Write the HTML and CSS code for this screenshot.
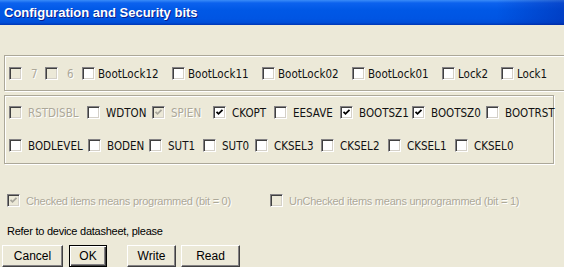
FILE: index.html
```html
<!DOCTYPE html>
<html>
<head>
  <title>Configuration and Security bits</title>
  <link rel="stylesheet" href="styles.css">
</head>
<body>
  <div class="titlebar">Configuration and Security bits</div>

  <div class="dialog">
    <!-- lock bits -->
    <div class="group group-lock">
      <div class="row row-lock">
        <label class="item disabled bitno"><span class="cb"></span><span class="txt">7</span></label>
        <label class="item disabled bitno"><span class="cb"></span><span class="txt">6</span></label>
        <label class="item"><span class="cb"></span><span class="txt">BootLock12</span></label>
        <label class="item"><span class="cb"></span><span class="txt">BootLock11</span></label>
        <label class="item"><span class="cb"></span><span class="txt">BootLock02</span></label>
        <label class="item"><span class="cb"></span><span class="txt">BootLock01</span></label>
        <label class="item"><span class="cb"></span><span class="txt">Lock2</span></label>
        <label class="item"><span class="cb"></span><span class="txt">Lock1</span></label>
      </div>
    </div>

    <!-- fuse bits -->
    <div class="group group-fuse">
      <div class="row row-fuse1">
        <label class="item disabled"><span class="cb"></span><span class="txt">RSTDISBL</span></label>
        <label class="item"><span class="cb"></span><span class="txt">WDTON</span></label>
        <label class="item disabled"><span class="cb checked"><svg viewBox="0 0 7 7"><polyline points="0.5,2.8 2.5,4.8 6.5,0.8"/></svg></span><span class="txt">SPIEN</span></label>
        <label class="item"><span class="cb checked"><svg viewBox="0 0 7 7"><polyline points="0.5,2.8 2.5,4.8 6.5,0.8"/></svg></span><span class="txt">CKOPT</span></label>
        <label class="item"><span class="cb"></span><span class="txt">EESAVE</span></label>
        <label class="item"><span class="cb checked"><svg viewBox="0 0 7 7"><polyline points="0.5,2.8 2.5,4.8 6.5,0.8"/></svg></span><span class="txt">BOOTSZ1</span></label>
        <label class="item"><span class="cb checked"><svg viewBox="0 0 7 7"><polyline points="0.5,2.8 2.5,4.8 6.5,0.8"/></svg></span><span class="txt">BOOTSZ0</span></label>
        <label class="item"><span class="cb"></span><span class="txt">BOOTRST</span></label>
      </div>
      <div class="row row-fuse2">
        <label class="item"><span class="cb"></span><span class="txt">BODLEVEL</span></label>
        <label class="item"><span class="cb"></span><span class="txt">BODEN</span></label>
        <label class="item"><span class="cb"></span><span class="txt">SUT1</span></label>
        <label class="item"><span class="cb"></span><span class="txt">SUT0</span></label>
        <label class="item"><span class="cb"></span><span class="txt">CKSEL3</span></label>
        <label class="item"><span class="cb"></span><span class="txt">CKSEL2</span></label>
        <label class="item"><span class="cb"></span><span class="txt">CKSEL1</span></label>
        <label class="item"><span class="cb"></span><span class="txt">CKSEL0</span></label>
      </div>
    </div>

    <div class="legend">
      <label class="item disabled"><span class="cb checked"><svg viewBox="0 0 7 7"><polyline points="0.5,2.8 2.5,4.8 6.5,0.8"/></svg></span><span class="txt">Checked items means programmed (bit = 0)</span></label>
      <label class="item disabled"><span class="cb"></span><span class="txt">UnChecked items means unprogrammed (bit = 1)</span></label>
    </div>

    <p class="note">Refer to device datasheet, please</p>

    <div class="buttons">
      <button type="button" class="btn btn-cancel">Cancel</button>
      <button type="button" class="btn btn-ok">OK</button>
      <button type="button" class="btn btn-write">Write</button>
      <button type="button" class="btn btn-read">Read</button>
    </div>
  </div>
</body>
</html>
```

FILE: styles.css
```css
/* Windows XP style dialog */

body {
  margin: 0;
  background-color: #ece9d8;
  font-family: "Liberation Sans", Arial, sans-serif;
  overflow: hidden;
}

.titlebar {
  height: 25px;
  box-sizing: border-box;
  padding: 5px 0 0 4px;
  color: #fff;
  font-size: 13px;
  font-weight: bold;
  line-height: 16px;
  text-shadow: 1px 1px 0 #0a1e8c;
  background:
    linear-gradient(to right, rgba(0, 0, 0, 0) 88%, rgba(0, 20, 140, 0.35) 100%),
    linear-gradient(to bottom, #3a8cf8 0%, #0c62ee 12%, #0058e6 40%, #0055e3 75%, #004ed8 90%, #0036b4 100%);
}

.dialog {
  padding-top: 30px;
}

/* group boxes */
.group {
  margin-left: 4px;
  border: 1px solid #aca899;
  box-shadow: inset 1px 1px 0 #fff, 1px 1px 0 #fff;
  padding-left: 4px;
}

.group-lock {
  width: 580px;
  padding-top: 11px;
  padding-bottom: 10px;
}

.group-fuse {
  width: 544px;
  margin-top: 4px;
  padding-top: 10px;
  padding-bottom: 11px;
}

.row {
  display: grid;
  height: 13px;
  align-items: center;
}

.row-lock {
  grid-template-columns: 36px 37px 90px 90px 90px 90px 59px auto;
}

.row-fuse1 {
  grid-template-columns: 78px 65px 61px 61px 66px 72px 74px auto;
}

.row-fuse2 {
  margin-top: 20px;
  grid-template-columns: 79px 61px 54px 52px 66px 67px 67px auto;
}

/* checkbox items */
.item {
  display: flex;
  align-items: center;
  gap: 6px;
  height: 13px;
  white-space: nowrap;
  font-family: "DejaVu Sans Condensed", "DejaVu Sans", sans-serif;
  font-stretch: condensed;
  font-size: 11.5px;
  color: #111;
}

.row-lock .item {
  gap: 3px;
}

.row-lock .bitno .txt {
  padding-left: 6px;
}

.cb {
  flex: none;
  width: 13px;
  height: 13px;
  box-sizing: border-box;
  border: 1px solid;
  border-color: #848284 #fff #fff #848284;
  box-shadow: inset 1px 1px 0 #404040, inset -1px -1px 0 #d4d0c8;
  background-color: #fff;
  display: flex;
  align-items: center;
  justify-content: center;
}

.cb svg {
  width: 7px;
  height: 7px;
  overflow: visible;
}

.cb polyline {
  fill: none;
  stroke: #000;
  stroke-width: 1.8;
}

.disabled .cb {
  background-color: #ece9d8;
}

.disabled .cb polyline {
  stroke: #a7a59c;
}

.disabled .txt {
  color: #aca899;
  text-shadow: 1px 1px 0 #fff;
}

/* legend and notes */
.legend {
  display: grid;
  grid-template-columns: 263px auto;
  margin-top: 30px;
  padding-left: 7px;
}

.legend .item {
  font-family: "Liberation Sans", Arial, sans-serif;
  font-stretch: normal;
  font-size: 11px;
  letter-spacing: -0.25px;
}

.note {
  margin: 17px 0 0 7px;
  font-size: 11px;
  line-height: 14px;
  letter-spacing: -0.25px;
  color: #000;
}

/* buttons */
.buttons {
  display: flex;
  margin-top: 7px;
  padding-left: 2px;
}

.btn {
  height: 22px;
  padding: 0;
  font-family: "Liberation Sans", Arial, sans-serif;
  font-size: 12px;
  color: #000;
  background-color: #ece9d8;
  border: 1px solid;
  border-color: #fff #404040 #404040 #fff;
  box-shadow: inset -1px -1px 0 #848284;
  border-radius: 0;
}

.btn-cancel {
  width: 61px;
}

.btn-ok {
  width: 38px;
  margin-left: 6px;
  border-color: #000;
  box-shadow: inset 1px 1px 0 #fff, inset -1px -1px 0 #404040, inset -2px -2px 0 #848284;
}

.btn-write {
  width: 49px;
  margin-left: 20px;
}

.btn-read {
  width: 59px;
  margin-left: 5px;
}
```
